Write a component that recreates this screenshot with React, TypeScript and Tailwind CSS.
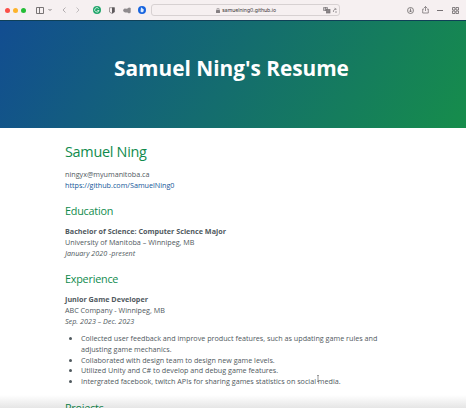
import type { ReactNode } from "react";

function BrowserBar() {
  return (
    <header className="flex h-[21px] shrink-0 items-center border-b border-[#0f4057] bg-[#f6f0f1] text-[#6b6668]">
      <div className="ml-[5px] flex gap-[3px]">
        <i className="size-[5px] rounded-full bg-[#fb4f48]" />
        <i className="size-[5px] rounded-full bg-[#fdb32b]" />
        <i className="size-[5px] rounded-full bg-[#24bd37]" />
      </div>
      <svg className="ml-[10px] h-[7px] w-[8px]" viewBox="0 0 8 7" fill="none" stroke="currentColor" strokeWidth=".9">
        <path d="M.5.5h7v6h-7zM3.500.5v6" />
      </svg>
      <svg className="ml-[4px] size-[4px]" viewBox="0 0 4 4" fill="none" stroke="currentColor" strokeWidth=".8">
        <path d="m.5 1 1.500 1.500L3.500 1" />
      </svg>
      <svg className="ml-[10px] h-[6px] w-[4px]" viewBox="0 0 4 6" fill="none" stroke="#aaa5a7" strokeWidth=".9">
        <path d="M3.500.5 1 3l2.500 2.500" />
      </svg>
      <svg className="ml-[10px] h-[6px] w-[4px]" viewBox="0 0 4 6" fill="none" stroke="#bcb7b9" strokeWidth=".9">
        <path d="M.5.5 3 3 .5 5.500" />
      </svg>
      <svg className="ml-[13px] size-[8px]" viewBox="0 0 8 8" fill="none">
        <circle cx="4" cy="4" r="4" fill="#20a66b" />
        <path d="M5.700 2.600A2.200 2.200 0 1 0 6 4.500H4.300" stroke="#d9f2e5" strokeWidth=".9" />
      </svg>
      <svg className="ml-[8px] h-[7px] w-[6px]" viewBox="0 0 6 7" fill="none">
        <path d="M.5.7h5V5L3 6.500.5 5Z" stroke="#8a8588" strokeWidth=".8" />
        <path d="M3 .5h2.500V5L3 6.500Z" fill="#5d585b" />
      </svg>
      <svg className="ml-[8px] h-[7px] w-[8px]" viewBox="0 0 8 7" fill="#8f8b8e">
        <path d="M0 3 1.500 1.500 4 1.700 6 .5 7.700 1v4.500L6 6.500 4.500 5.500H2L.5 4.500Z" />
      </svg>
      <svg className="ml-[7px] size-[8px]" viewBox="0 0 8 8">
        <circle cx="4" cy="4" r="4" fill="#1764df" />
        <path d="M3 1.200 5.800 3.500 5.500 5.500 4 6.500 2.500 5.500Z" fill="#dcecff" />
      </svg>
      <div className="ml-[5px] flex h-[12px] w-[189px] items-center rounded-[3px] border border-[#d7d1d2]">
        <svg className="ml-[64px] h-[5px] w-[4px]" viewBox="0 0 4 5" fill="#858083">
          <rect y="2" width="4" height="3" rx=".5" />
          <path d="M1 2V1a1 1 0 0 1 2 0v1" fill="none" stroke="#858083" strokeWidth=".7" />
        </svg>
        <span className="ml-[2px] w-[101px] whitespace-nowrap font-['Inter','Liberation_Sans',sans-serif] text-[5.200px] leading-[10px] text-[#3d393b]">samuelning0.github.io</span>
        <svg className="h-[7px] w-[15px] shrink-0" viewBox="0 0 15 7" fill="none" stroke="#777275" strokeWidth=".7">
          <path d="M.5.5h4v3h-4zM1 2h3M2.500 0v4" />
          <rect x="3.500" y="2.500" width="3.500" height="3.500" fill="#8a8588" />
          <path d="M13.200 2.500A2 2 0 0 0 10.500 5M11.500 1.200l2 1M13 4v2" />
        </svg>
      </div>
      <svg className="ml-[67px] size-[7px]" viewBox="0 0 7 7" fill="none" stroke="currentColor" strokeWidth=".8">
        <circle cx="3.500" cy="3.500" r="3" />
        <path d="M3.500 1.500v3.300M2 3.500l1.500 1.500L5 3.500" />
      </svg>
      <svg className="ml-[8px] h-[8px] w-[7px]" viewBox="0 0 7 8" fill="none" stroke="currentColor" strokeWidth=".7">
        <path d="M2 3H.7v4h5.600V3H5M3.500 5V.5M2 2 3.500.5 5 2" />
      </svg>
      <i className="ml-[8px] h-px w-[6px] bg-[#777275]" />
      <svg className="ml-[9px] size-[7px]" viewBox="0 0 7 7" fill="none" stroke="currentColor" strokeWidth=".8">
        <path d="M.5 3v-2.500h2.500v2.500H.5M4 .5h2.500v2.500H4zM.5 4H3v2.500H.5zM4 4h2.500v2.500H4z" />
      </svg>
    </header>
  );
}

function SectionTitle({ children }: { children: ReactNode }) {
  return <h3 className="text-[10.800px] leading-[16px] tracking-[-0.220px] text-[#108b4d]">{children}</h3>;
}

const achievements = [
  "Collected user feedback and improve product features, such as updating game rules and adjusting game mechanics.",
  "Collaborated with design team to design new game levels.",
  "Utilized Unity and C# to develop and debug game features.",
  "Intergrated facebook, twitch APIs for sharing games statistics on social media.",
];

export default function App() {
  return (
    <div className="relative flex h-[408px] w-[466px] flex-col overflow-hidden bg-white font-['Open_Sans','Noto_Sans',sans-serif] text-[7.200px] leading-[10.800px] text-[#50595e]">
      <BrowserBar />
      <div className="flex h-[107px] shrink-0 items-center justify-center bg-[linear-gradient(120deg,#124d91,#168d4b)] pr-[3px] pb-[14px]">
        <h1 className="whitespace-nowrap text-[20.800px] leading-7 font-bold text-white">Samuel Ning's Resume</h1>
      </div>
      <main className="ml-[65px] w-[335px] pt-[13px]">
        <h2 className="text-[14.400px] leading-[21px] tracking-[-0.270px] text-[#108b4d]">Samuel Ning</h2>
        <div className="mt-[7px]">
          <p>ningyx@myumanitoba.ca</p>
          <p className="text-[#155799]">https://github.com/SamuelNing0</p>
        </div>
        <section className="mt-[12.400px]">
          <SectionTitle>Education</SectionTitle>
          <div className="mt-[7px]">
            <p className="font-bold">Bachelor of Science: Computer Science Major</p>
            <p>University of Manitoba – Winnipeg, MB</p>
            <p className="italic">January 2020 -present</p>
          </div>
        </section>
        <section className="mt-[12.600px]">
          <SectionTitle>Experience</SectionTitle>
          <div className="mt-[7px]">
            <p className="font-bold">Junior Game Developer</p>
            <p>ABC Company - Winnipeg, MB</p>
            <p className="italic">Sep. 2023 – Dec. 2023</p>
          </div>
          <ul className="mt-[6.600px] list-disc pl-[16px]">
            {achievements.map((item) => <li key={item}>{item}</li>)}
          </ul>
        </section>
        <section className="mt-[12.600px]">
          <SectionTitle>Projects</SectionTitle>
        </section>
      </main>
      <svg className="absolute top-[375px] left-[316px] h-[7px] w-[4px]" viewBox="0 0 4 7" fill="none" stroke="#555" strokeWidth=".6">
        <path d="M1 .5h2M2 1v5M1 6.500h2" />
      </svg>
      <div className="absolute inset-x-0 bottom-0 h-[13px] bg-linear-to-b from-transparent to-black/10" />
    </div>
  );
}
